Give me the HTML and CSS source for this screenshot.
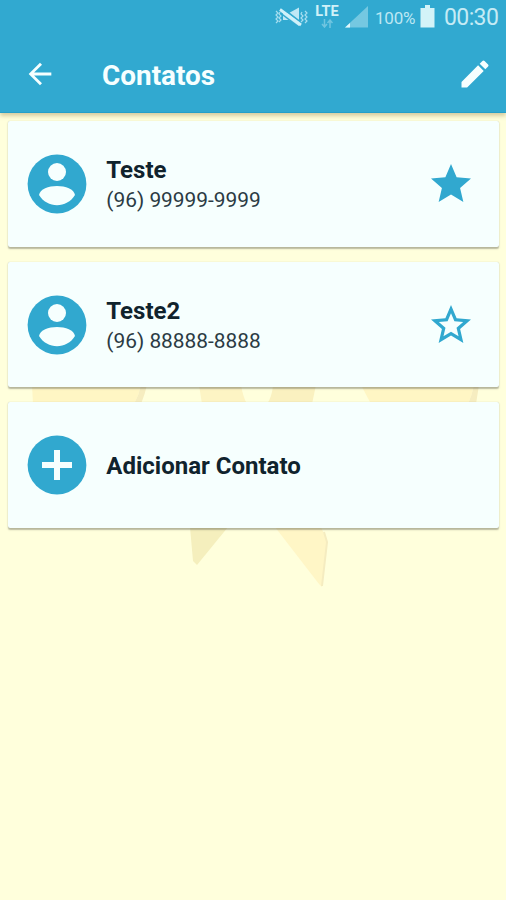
FILE: index.html
```html
<!DOCTYPE html>
<html lang="pt-BR">
<head>
<meta charset="utf-8">
<title>Contatos</title>
<link rel="stylesheet" href="styles.css">
</head>
<body>
<div class="screen">
  <header class="header">
    <div class="status">
      <svg class="vibrate" viewBox="0 0 34 20" width="34" height="20">
        <path d="M9 6h6l10-5.500v19L15 13H9z" fill="#bfe8f5"/>
        <path d="M7.500 .5l20 15.500" stroke="#31a9d0" stroke-width="2"/>
        <path d="M6 2.500l21 15.500" stroke="#d0f1f9" stroke-width="2.800"/>
        <path d="M5 5l20 15" stroke="#31a9d0" stroke-width="1.500"/>
        <path d="M2 4l2 2-2 2 2 2-2 2 2 2-2 2M6 5l-1 2 2 2-2 2 2 2-2 2M28 5l-1 2 2 2-2 2 2 2-2 2M31 4l2 2-2 2 2 2-2 2 2 2-2 2" fill="none" stroke="#a5ddef" stroke-width="1.200"/>
      </svg>
      <div class="network">
        <span class="lte">LTE</span>
        <svg viewBox="0 0 12 9" width="12" height="9"><path d="M3.500 0v7M1 5l2.500 3L6 5M9 9V2M6.500 4L9 1l2.500 3" fill="none" stroke="#70c5e0" stroke-width="1.500"/></svg>
      </div>
      <svg class="signal" viewBox="0 0 24 22" width="24" height="22"><path d="M0 21.500L23 0v21.500z" fill="#75c8e1"/><path d="M0 21.500l5-4.500v4.500z" fill="#e1f8fd"/></svg>
      <span class="percent">100%</span>
      <svg class="battery" viewBox="0 0 15 23" width="15" height="23"><path d="M5 0h5v3h4.500v19.500H.5V3H5z" fill="#d3f3f8"/></svg>
      <time class="clock">00:30</time>
    </div>
    <div class="toolbar">
      <svg class="back" viewBox="0 0 24 24" width="34" height="34"><path d="M20 11H7.830l5.590-5.590L12 4l-8 8 8 8 1.410-1.410L7.830 13H20z"/></svg>
      <h1 class="title">Contatos</h1>
      <svg class="edit" viewBox="0 0 24 24" width="36" height="36"><path d="M3 17.250V21h3.750L17.810 9.940l-3.750-3.750zM20.710 7.040a1 1 0 0 0 0-1.410l-2.340-2.340a1 1 0 0 0-1.410 0l-1.830 1.830 3.750 3.750z"/></svg>
    </div>
  </header>
  <main class="content">
    <svg class="backdrop" viewBox="0 0 506 787" width="506" height="787" aria-hidden="true">
      <path d="M32 272h109q-2 10-7 19H33z" fill="#fff6c4"/>
      <path d="M141 272h6q-2 9-6 19h-7q5-9 7-19z" fill="#f6edc0"/>
      <path d="M199 272h42q2 12 6 19h-45z" fill="#fdf4c4"/>
      <path d="M273 272h43l-4 19h-45q5-7 6-19z" fill="#faf1c0"/>
      <path d="M361 272h113q-2 10-6 19h-97z" fill="#fff6c4"/>
      <path d="M474 272h5l-3 19h-8q4-9 6-19z" fill="#f6edc0"/>
      <path d="M190 414h38l-31 38-4-4z" fill="#f5efbd"/>
      <path d="M275 414h46l6 14-5 46-3-3z" fill="#fff6c6"/>
      <path d="M324 419l3 10-5 44" fill="none" stroke="#f5ecc0" stroke-width="2"/>
    </svg>
    <ul class="list">
      <li class="card">
        <svg class="avatar" viewBox="0 0 60 60" width="60" height="60"><circle cx="30" cy="30" r="29.400" fill="#31a8cf"/><circle cx="30" cy="18" r="9" fill="#f6fffe"/><path d="M12 41c2-12 34-12 36 0-8 13.500-28 13.500-36 0z" fill="#f6fffe"/></svg>
        <div class="info"><strong class="name">Teste</strong><span class="phone">(96) 99999-9999</span></div>
        <svg class="star" viewBox="0 0 24 24" width="48" height="48"><path d="M12 17.270L18.180 21l-1.640-7.030L22 9.240l-7.190-.61L12 2 9.190 8.630 2 9.240l5.460 4.730L5.820 21z"/></svg>
      </li>
      <li class="card">
        <svg class="avatar" viewBox="0 0 60 60" width="60" height="60"><circle cx="30" cy="30" r="29.400" fill="#31a8cf"/><circle cx="30" cy="18" r="9" fill="#f6fffe"/><path d="M12 41c2-12 34-12 36 0-8 13.500-28 13.500-36 0z" fill="#f6fffe"/></svg>
        <div class="info"><strong class="name">Teste2</strong><span class="phone">(96) 88888-8888</span></div>
        <svg class="star" viewBox="0 0 24 24" width="48" height="48"><path d="M22 9.240l-7.190-.62L12 2 9.190 8.630 2 9.240l5.460 4.730L5.820 21 12 17.270 18.180 21l-1.630-7.030zM12 15.400l-3.760 2.270 1-4.280-3.320-2.880 4.380-.38L12 6.100l1.710 4.040 4.380.38-3.320 2.880 1 4.280z"/></svg>
      </li>
      <li class="card">
        <svg class="avatar" viewBox="0 0 60 60" width="60" height="60"><circle cx="30" cy="30" r="29.400" fill="#31a8cf"/><path d="M27 15h6v12h12v6H33v12h-6V33H15v-6h12z" fill="#f6fffe"/></svg>
        <div class="info"><strong class="name">Adicionar Contato</strong></div>
      </li>
    </ul>
  </main>
</div>
</body>
</html>
```
FILE: styles.css
```css
* { box-sizing: border-box; }
body { margin: 0; font-family: Roboto, "Liberation Sans", sans-serif; background: #ffffdc; }
svg { display: block; flex: none; }
.screen { width: 506px; height: 900px; display: flex; flex-direction: column; overflow: hidden; background: #ffffdc; }
.header { height: 113px; flex: none; background: #31a9d0; border-bottom: 1px solid #259fc9; box-shadow: 0 3px 4px rgba(151, 125, 65, .38); z-index: 1; }
.status { height: 35px; display: flex; align-items: center; padding-right: 7px; justify-content: flex-end; }
.vibrate { margin: 0 6px 2px 0; }
.network { display: flex; flex-direction: column; align-items: center; width: 26px; margin: 0 5px 3px 0; }
.lte { font-size: 14.500px; font-weight: 700; line-height: 15px; color: #d0f1f8; }
.signal { margin: 0 6px 2px 0; }
.percent { width: 41px; font-size: 17px; letter-spacing: -.2px; color: #bce7f3; margin-right: 4px; white-space: nowrap; }
.battery { margin: 0 9px 2px 0; }
.clock { width: 55px; font-size: 23px; letter-spacing: -.6px; color: #c5ebf5; white-space: nowrap; }
.toolbar { height: 77px; display: flex; align-items: center; padding: 0 13px 0 23px; }
.back, .edit { fill: #f6ffff; }
.title { flex: 1; margin: 5px 0 0 45px; font-size: 27.900px; line-height: 32px; font-weight: 700; color: #f6ffff; }
.content { position: relative; flex: 1; }
.backdrop { position: absolute; top: 0; left: 0; }
.list { position: relative; margin: 0; padding: 8px 7px 0 8px; list-style: none; display: grid; gap: 15px; }
.card { height: 125.700px; display: flex; align-items: center; padding: 0 24px 0 19px; border-radius: 2px; background: #f6fffe; box-shadow: 0 1.500px 1.500px rgba(80, 80, 65, .4), 0 0 1px rgba(80, 80, 65, .25); }
.info { flex: 1; margin: 2px 0 0 19.300px; display: flex; flex-direction: column; color: #10232d; }
.name { font-size: 24px; line-height: 30px; font-weight: 700; }
.phone { font-size: 20.900px; line-height: 30px; color: #2b3b44; }
.star { fill: #31a8cf; }
```
